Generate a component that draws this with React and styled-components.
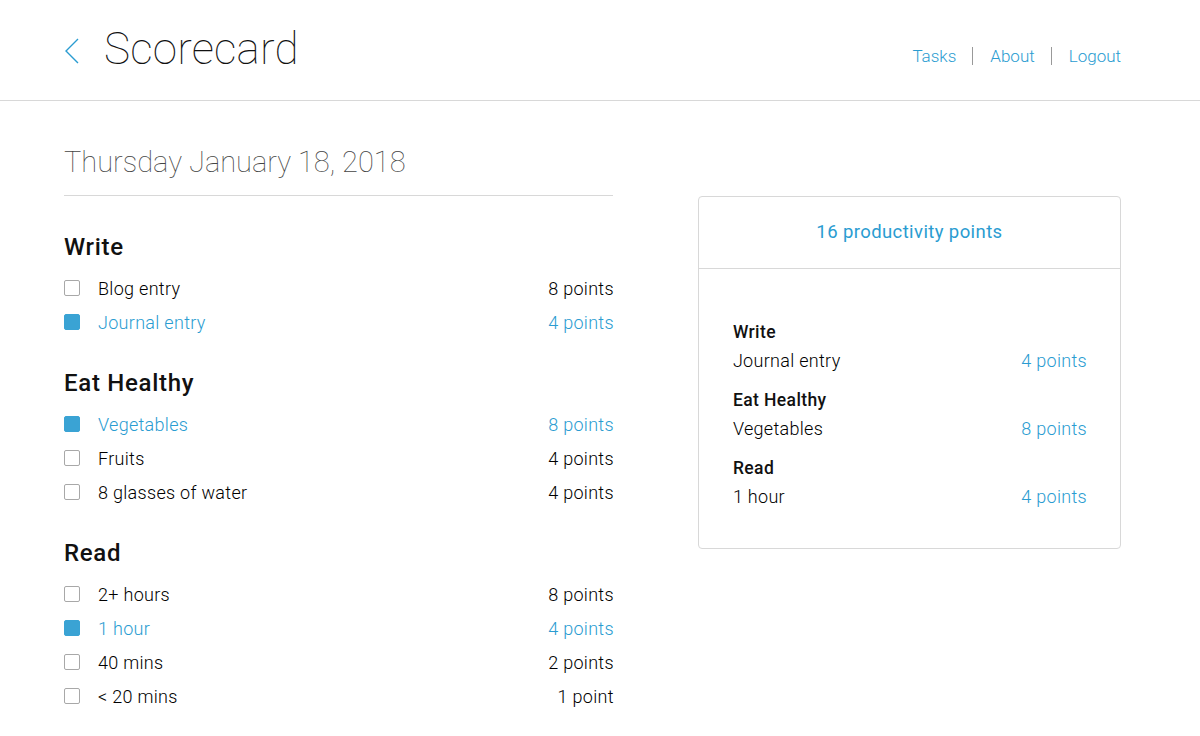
import React from 'react'
import styled, { createGlobalStyle } from 'styled-components'

const BLUE = '#2a9cd1'

const GlobalStyle = createGlobalStyle`
  body {
    margin: 0;
    background: #fff;
    font-family: "Helvetica Neue", Roboto, "Liberation Sans", sans-serif;
    color: #111;
  }
`

const sections = [
  {
    title: 'Write',
    items: [
      { label: 'Blog entry', points: 8 },
      { label: 'Journal entry', points: 4, done: true }
    ]
  },
  {
    title: 'Eat Healthy',
    items: [
      { label: 'Vegetables', points: 8, done: true },
      { label: 'Fruits', points: 4 },
      { label: '8 glasses of water', points: 4 }
    ]
  },
  {
    title: 'Read',
    items: [
      { label: '2+ hours', points: 8 },
      { label: '1 hour', points: 4, done: true },
      { label: '40 mins', points: 2 },
      { label: '< 20 mins', points: 1 }
    ]
  }
]

const pointsText = n => (n === 1 ? '1 point' : `${n} points`)

const Header = styled.header`
  height: 100px;
  border-bottom: 1px solid #d8d8d8;
  display: flex;
  align-items: center;
  justify-content: space-between;
  padding: 0 79px 0 64px;
`
const Brand = styled.div`
  display: flex;
  align-items: center;
  gap: 24px;
`
const Back = styled.svg`
  width: 16px;
  height: 26px;
  margin-top: 2px;
`
const AppTitle = styled.h1`
  margin: 0;
  font-family: Roboto, "Liberation Sans", sans-serif;
  font-weight: 100;
  font-size: 44px;
  letter-spacing: 0.2px;
  color: #111;
  margin-top: -2px;
`
const Nav = styled.nav`
  display: flex;
  align-items: center;
  margin-top: 12px;
`
const NavLink = styled.a`
  color: ${BLUE};
  font-size: 17px;
  font-weight: 300;
  text-decoration: none;
  padding: 0 16px 0 17px;
  border-left: ${p => (p.first ? 'none' : '1px solid #999')};
  line-height: 18px;
  &:last-child { padding-right: 0; }
`
const Main = styled.main`
  display: flex;
  align-items: flex-start;
  gap: 85px;
  padding: 0 79px 0 64px;
`
const Left = styled.div`
  width: 550px;
`
const DateTitle = styled.h2`
  margin: 0;
  padding: 44px 0 16px;
  font-family: Roboto, "Liberation Sans", sans-serif;
  font-weight: 100;
  font-size: 29px;
  color: #444;
  border-bottom: 1px solid #d8d8d8;
`
const Section = styled.section`
  margin-top: ${p => (p.first ? '37px' : '30px')};
`
const SectionTitle = styled.h3`
  margin: 0 0 10px;
  font-size: 24px;
  font-weight: 500;
  letter-spacing: 0.7px;
  line-height: 28px;
  color: #111;
`
const Row = styled.div`
  display: flex;
  align-items: center;
  height: 34px;
  font-size: 18px;
  font-weight: 300;
  letter-spacing: 0.3px;
  color: ${p => (p.done ? BLUE : '#000')};
`
const Box = styled.span`
  width: 16px;
  height: 16px;
  box-sizing: border-box;
  border-radius: 2px;
  border: 1px solid ${p => (p.done ? '#3aa3d4' : '#a8a8a8')};
  background: ${p => (p.done ? '#3aa3d4' : '#fff')};
  margin-right: 18px;
  flex-shrink: 0;
`
const Label = styled.span`
  flex: 1;
`
const Points = styled.span`
  margin-right: -1px;
`
const Card = styled.aside`
  margin-top: 95px;
  width: 422px;
  border: 1px solid #d8d8d8;
  border-radius: 4px;
`
const CardHead = styled.div`
  height: 72px;
  display: flex;
  align-items: center;
  justify-content: center;
  border-bottom: 1px solid #d8d8d8;
  color: ${BLUE};
  font-size: 18.5px;
  letter-spacing: 0.4px;
  font-weight: 400;
  padding-bottom: 2px;
  box-sizing: border-box;
`
const CardBody = styled.div`
  padding: 51px 33px 34px 34px;
`
const CardSection = styled.div`
  margin-top: ${p => (p.first ? '0' : '10px')};
`
const CardTitle = styled.div`
  font-size: 17.5px;
  font-weight: 500;
  letter-spacing: 0.4px;
  line-height: 24px;
  color: #111;
`
const CardRow = styled.div`
  display: flex;
  justify-content: space-between;
  font-size: 18px;
  font-weight: 300;
  letter-spacing: 0.3px;
  line-height: 34px;
  color: #000;
`
const CardPoints = styled.span`
  color: ${BLUE};
`

export default function App() {
  const done = sections
    .map(s => ({ title: s.title, items: s.items.filter(i => i.done) }))
    .filter(s => s.items.length)
  const total = done.reduce((t, s) => t + s.items.reduce((a, i) => a + i.points, 0), 0)

  return (
    <>
      <GlobalStyle />
      <Header>
        <Brand>
          <Back viewBox="0 0 16 26">
            <path d="M14 1 L2 13 L14 25" fill="none" stroke={BLUE} strokeWidth="1.4" />
          </Back>
          <AppTitle>Scorecard</AppTitle>
        </Brand>
        <Nav>
          <NavLink first href="#">Tasks</NavLink>
          <NavLink href="#">About</NavLink>
          <NavLink href="#">Logout</NavLink>
        </Nav>
      </Header>
      <Main>
        <Left>
          <DateTitle>Thursday January 18, 2018</DateTitle>
          {sections.map((s, idx) => (
            <Section key={s.title} first={idx === 0}>
              <SectionTitle>{s.title}</SectionTitle>
              {s.items.map(item => (
                <Row key={item.label} done={item.done}>
                  <Box done={item.done} />
                  <Label>{item.label}</Label>
                  <Points>{pointsText(item.points)}</Points>
                </Row>
              ))}
            </Section>
          ))}
        </Left>
        <Card>
          <CardHead>{total} productivity points</CardHead>
          <CardBody>
            {done.map((s, idx) => (
              <CardSection key={s.title} first={idx === 0}>
                <CardTitle>{s.title}</CardTitle>
                {s.items.map(item => (
                  <CardRow key={item.label}>
                    <span>{item.label}</span>
                    <CardPoints>{pointsText(item.points)}</CardPoints>
                  </CardRow>
                ))}
              </CardSection>
            ))}
          </CardBody>
        </Card>
      </Main>
    </>
  )
}
